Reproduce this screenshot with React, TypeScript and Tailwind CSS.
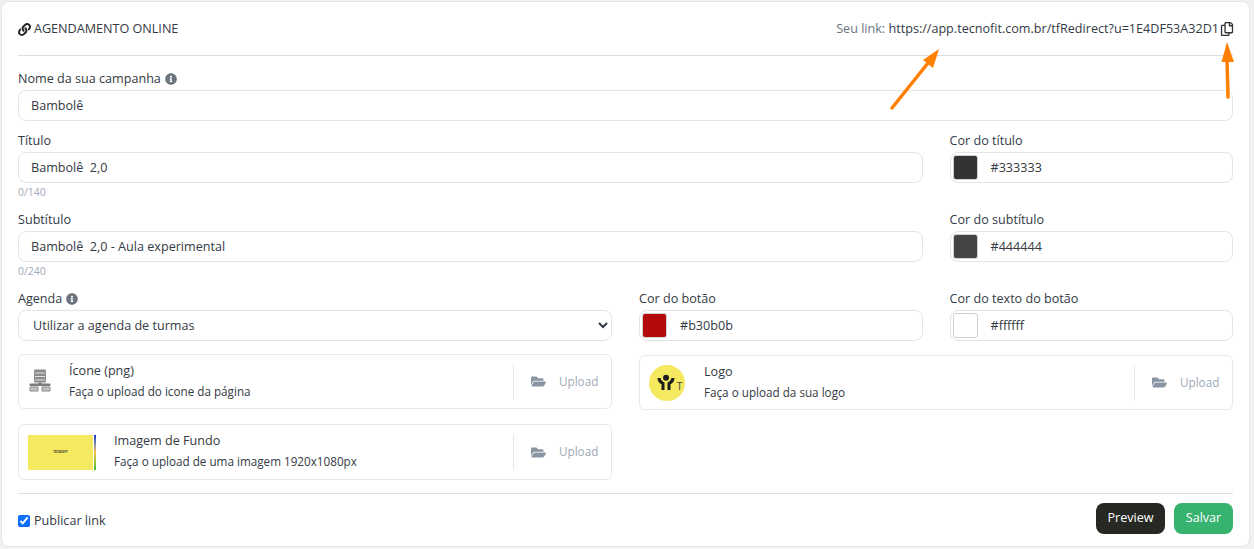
import { FaFolderOpen, FaInfoCircle, FaLink, FaRegCopy } from 'react-icons/fa';

function Label({ text, info }: { text: string; info?: boolean }) {
  return (
    <label className="flex h-[17px] items-center gap-[4px] text-[12.6px] leading-[17px] text-[#333a44]">
      {text}
      {info && <FaInfoCircle className="text-[12px] text-[#6c757d]" />}
    </label>
  );
}

function TextField({ value }: { value: string }) {
  return (
    <input
      readOnly
      value={value}
      className="mt-[3px] block h-[31px] w-full rounded-[8px] border border-[#e4e4e4] bg-white px-[12px] text-[12.6px] text-[#333a44] outline-none"
    />
  );
}

function ColorField({ label, color }: { label: string; color: string }) {
  return (
    <div>
      <Label text={label} />
      <div className="mt-[3px] flex h-[31px] items-center rounded-[8px] border border-[#e4e4e4] bg-white pl-[2px]">
        <span className="h-[25px] w-[25px] rounded-[3px] border border-[#d0d0d0]" style={{ backgroundColor: color }} />
        <span className="ml-[13px] pt-[2px] text-[12.6px] text-[#333a44]">{color}</span>
      </div>
    </div>
  );
}

function UploadCard({ title, hint, thumb, thumbWidth, height, textOffset }: { title: string; hint: string; thumb: React.ReactNode; thumbWidth: string; height: string; textOffset: string }) {
  return (
    <div className={`flex items-center rounded-[6px] border border-[#e9e9e9] bg-white pl-[9px] ${height}`}>
      <div className={thumbWidth}>{thumb}</div>
      <div className={`flex-1 text-[11.7px] text-[#333a44] ${textOffset}`}>
        <div className="text-[12.6px] leading-[17px]">{title}</div>
        <div className="mt-[4px] leading-[16px]">{hint}</div>
      </div>
      <div className="flex h-[36px] w-[98px] items-center gap-[13px] border-l border-[#e9e9e9] pl-[17px] text-[11.7px] text-[#a0aab8]">
        <FaFolderOpen className="text-[15px] text-[#8a95a3]" />
        Upload
      </div>
    </div>
  );
}

function ServerIcon() {
  return (
    <svg width="22" height="23" viewBox="0 0 22 23" className="ml-[1px] mt-[-2px]">
      <rect x="5" y="0.5" width="12" height="13" rx="1" fill="#8a8e8a" />
      <path d="M6 4h10M6 7.5h10M6 11h10" stroke="#e4e4e4" strokeWidth="1" />
      <rect x="9.5" y="13.5" width="3" height="2.5" fill="#777" />
      <rect x="0.5" y="14.5" width="21" height="2.5" rx="1" fill="#7c7c7c" />
      <path d="M1 18h8v4H1zM13 18h8v4h-8z" fill="#c4c4c4" stroke="#8a8a8a" strokeWidth="1" />
    </svg>
  );
}

function LogoThumb() {
  return (
    <svg width="36" height="36" viewBox="0 0 36 36">
      <circle cx="18" cy="18" r="18" fill="#f5e960" />
      <circle cx="17" cy="12.7" r="3" fill="#1c1c1c" />
      <path d="M10 13c0 3 2 4.500 4 5.500v6.500M24 13c0 3-2 4.500-4 5.500v6.500" fill="none" stroke="#1c1c1c" strokeWidth="3" />
      <text x="27.500" y="25" fontSize="11" fill="#444" fontFamily="Open Sans">T</text>
    </svg>
  );
}

function BackgroundThumb() {
  return (
    <div className="flex h-[35px] w-[68px] overflow-hidden">
      <div className="flex w-[65px] items-center justify-center bg-[#f5e960] text-[3px] font-bold text-[#333]">TECNOFIT</div>
      <div className="w-[1px] bg-white" />
      <div className="w-[2px] bg-gradient-to-b from-[#2222cc] via-[#f5c040] to-[#33bb33]" />
    </div>
  );
}

export default function App() {
  return (
    <div className="relative h-[549px] w-[1254px] overflow-hidden bg-[#f1f1f1] font-['Open_Sans',sans-serif]">
      <div className="ml-[1px] mt-[1px] h-[546px] w-[1249px] rounded-[8px] border border-[#e6e6e6] bg-white px-[16px]">
        {/* Header */}
        <div className="flex h-[54px] items-center justify-between border-b border-[#dedede] pt-[2px]">
          <div className="flex items-center gap-[3px] text-[12.6px] text-[#333a44]">
            <FaLink className="text-[13px] text-[#222]" />
            AGENDAMENTO ONLINE
          </div>
          <div className="mr-[-1px] flex items-center text-[12.6px] text-[#6c757d]">
            Seu link:&nbsp;
            <span className="text-[#333a44]">https://app.tecnofit.com.br/tfRedirect?u=1E4DF53A32D1</span>
            <FaRegCopy className="ml-[1px] text-[14px] text-[#333]" />
          </div>
        </div>

        {/* Form */}
        <div className="mt-[14px]">
          <Label text="Nome da sua campanha" info />
          <TextField value="Bambolê" />
        </div>

        <div className="mt-[11px] grid grid-cols-12 gap-x-[27px]">
          <div className="col-span-9">
            <Label text="Título" />
            <TextField value="Bambolê  2,0" />
            <div className="mt-[2px] h-[15px] text-[10.5px] leading-[15px] text-[#a0aab8]">0/140</div>
          </div>
          <div className="col-span-3">
            <ColorField label="Cor do título" color="#333333" />
          </div>
          <div className="col-span-9 mt-[11px]">
            <Label text="Subtítulo" />
            <TextField value="Bambolê  2,0 - Aula experimental" />
            <div className="mt-[2px] h-[15px] text-[10.5px] leading-[15px] text-[#a0aab8]">0/240</div>
          </div>
          <div className="col-span-3 mt-[11px]">
            <ColorField label="Cor do subtítulo" color="#444444" />
          </div>
          <div className="col-span-6 mt-[11px]">
            <Label text="Agenda" info />
            <select className="mt-[3px] block h-[31px] w-full rounded-[8px] border border-[#e4e4e4] bg-white pl-[10px] pr-[2px] text-[12.6px] text-[#333a44] outline-none">
              <option>Utilizar a agenda de turmas</option>
            </select>
          </div>
          <div className="col-span-3 mt-[11px]">
            <ColorField label="Cor do botão" color="#b30b0b" />
          </div>
          <div className="col-span-3 mt-[11px]">
            <ColorField label="Cor do texto do botão" color="#ffffff" />
          </div>
        </div>

        {/* Uploads */}
        <div className="mt-[13px] grid grid-cols-2 gap-x-[27px]">
          <div className="flex flex-col gap-[15px]">
            <UploadCard title="Ícone (png)" hint="Faça o upload do icone da página" thumb={<ServerIcon />} thumbWidth="w-[41px]" height="h-[55px]" textOffset="mb-[2px]" />
            <UploadCard title="Imagem de Fundo" hint="Faça o upload de uma imagem 1920x1080px" thumb={<BackgroundThumb />} thumbWidth="w-[86px]" height="h-[56px]" textOffset="mb-[4px]" />
          </div>
          <div className="pt-[1px]">
            <UploadCard title="Logo" hint="Faça o upload da sua logo" thumb={<LogoThumb />} thumbWidth="w-[55px]" height="h-[55px]" textOffset="mb-[2px]" />
          </div>
        </div>

        {/* Footer */}
        <div className="mt-[13px] flex h-[54px] items-start justify-between border-t border-[#dedede] pt-[9px]">
          <label className="mt-[9px] flex items-center gap-[4px] text-[12.6px] text-[#333a44]">
            <input type="checkbox" defaultChecked className="h-[12px] w-[12px] accent-[#0d6efd]" />
            Publicar link
          </label>
          <div className="flex gap-[9px]">
            <button className="h-[31px] w-[69px] rounded-[8px] bg-[#262823] text-[12.6px] text-white">Preview</button>
            <button className="h-[31px] w-[59px] rounded-[8px] bg-[#35b36f] text-[12.6px] text-white">Salvar</button>
          </div>
        </div>
      </div>

      {/* Annotation arrows */}
      <svg className="pointer-events-none absolute left-0 top-0" width="1254" height="549">
        <path d="M892 108 L928 63" stroke="#ff8000" strokeWidth="3.5" strokeLinecap="round" />
        <path d="M939 49 L923 60 L933 68 Z" fill="#ff8000" />
        <path d="M1228 97 L1227 58" stroke="#ff8000" strokeWidth="3.5" strokeLinecap="round" />
        <path d="M1227 42 L1221.500 62 L1234 62 Z" fill="#ff8000" />
      </svg>
    </div>
  );
}
